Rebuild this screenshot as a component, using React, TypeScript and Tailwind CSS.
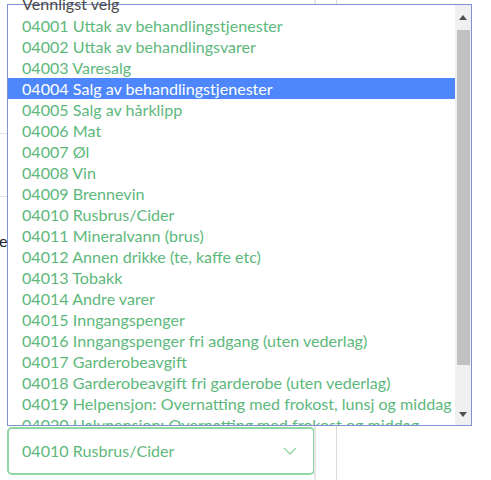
import React from 'react';

const options = [
  '04001 Uttak av behandlingstjenester',
  '04002 Uttak av behandlingsvarer',
  '04003 Varesalg',
  '04004 Salg av behandlingstjenester',
  '04005 Salg av hårklipp',
  '04006 Mat',
  '04007 Øl',
  '04008 Vin',
  '04009 Brennevin',
  '04010 Rusbrus/Cider',
  '04011 Mineralvann (brus)',
  '04012 Annen drikke (te, kaffe etc)',
  '04013 Tobakk',
  '04014 Andre varer',
  '04015 Inngangspenger',
  '04016 Inngangspenger fri adgang (uten vederlag)',
  '04017 Garderobeavgift',
  '04018 Garderobeavgift fri garderobe (uten vederlag)',
  '04019 Helpensjon: Overnatting med frokost, lunsj og middag',
  '04020 Halvpensjon: Overnatting med frokost og middag',
];

const highlighted = '04004 Salg av behandlingstjenester';

export default function App() {
  return (
    <div className="relative w-[491px] h-[480px] overflow-hidden bg-white font-['Lato',sans-serif] text-[16.1px]">
      {/* Page behind the popup */}
      <div className="flex h-full">
        <div className="w-[314px] flex flex-col">
          <div className="h-[133px]" />
          <div className="h-px w-full bg-[#e2e2e2]" />
          <div className="h-[62px]" />
          <div className="h-px w-full bg-[#e2e2e2]" />
          <div className="h-[34px]" />
          <div className="-ml-[8px] text-[#222] leading-5">se</div>
          <div className="flex-1" />
          <div className="ml-[7px] mb-[5px] h-[48px] w-[308px] rounded-[5px] border-2 border-[#8fd8a6] flex items-center justify-between pl-[13px] pr-[16px]">
            <span className="text-[#5db87c] pt-px">04010 Rusbrus/Cider</span>
            <svg width="14" height="8" viewBox="0 0 14 8" fill="none" stroke="#8fd8a6" strokeWidth="1.3">
              <path d="M1 1l6 6 6-6" />
            </svg>
          </div>
        </div>
        <div className="w-[2px] bg-[#e6e6e6]" />
        <div className="w-[20px]" />
        <div className="w-px bg-[#dcdcdc]" />
      </div>

      {/* Native select popup */}
      <div className="absolute left-[7px] top-[4px] w-[465px] h-[422px] border border-[#7d91d3] bg-white flex">
        <div className="flex-1 overflow-hidden">
          <div className="pt-[10px]">
            {options.map((o) => (
              <div
                key={o}
                className={
                  o === highlighted
                    ? 'h-[21px] leading-[21px] pl-[14px] bg-[#4d87fb] text-white whitespace-nowrap'
                    : 'h-[21px] leading-[21px] pl-[14px] text-[#5db87c] whitespace-nowrap'
                }
              >
                {o}
              </div>
            ))}
          </div>
        </div>
        <div className="w-[16px] bg-[#f0f0f0] flex flex-col items-center">
          <div className="h-[25px] flex items-center justify-center">
            <svg width="8" height="5" viewBox="0 0 8 5"><path d="M0 5L4 0l4 5z" fill="#505050" /></svg>
          </div>
          <div className="w-[13px] h-[335px] bg-[#c1c1c1]" />
          <div className="flex-1" />
          <div className="h-[22px] flex items-center justify-center">
            <svg width="8" height="5" viewBox="0 0 8 5"><path d="M0 0h8L4 5z" fill="#505050" /></svg>
          </div>
        </div>
      </div>
      <div className="absolute left-[22px] -top-[7px] text-[#4a4a4a] leading-[21px]">Vennligst velg</div>
    </div>
  );
}
